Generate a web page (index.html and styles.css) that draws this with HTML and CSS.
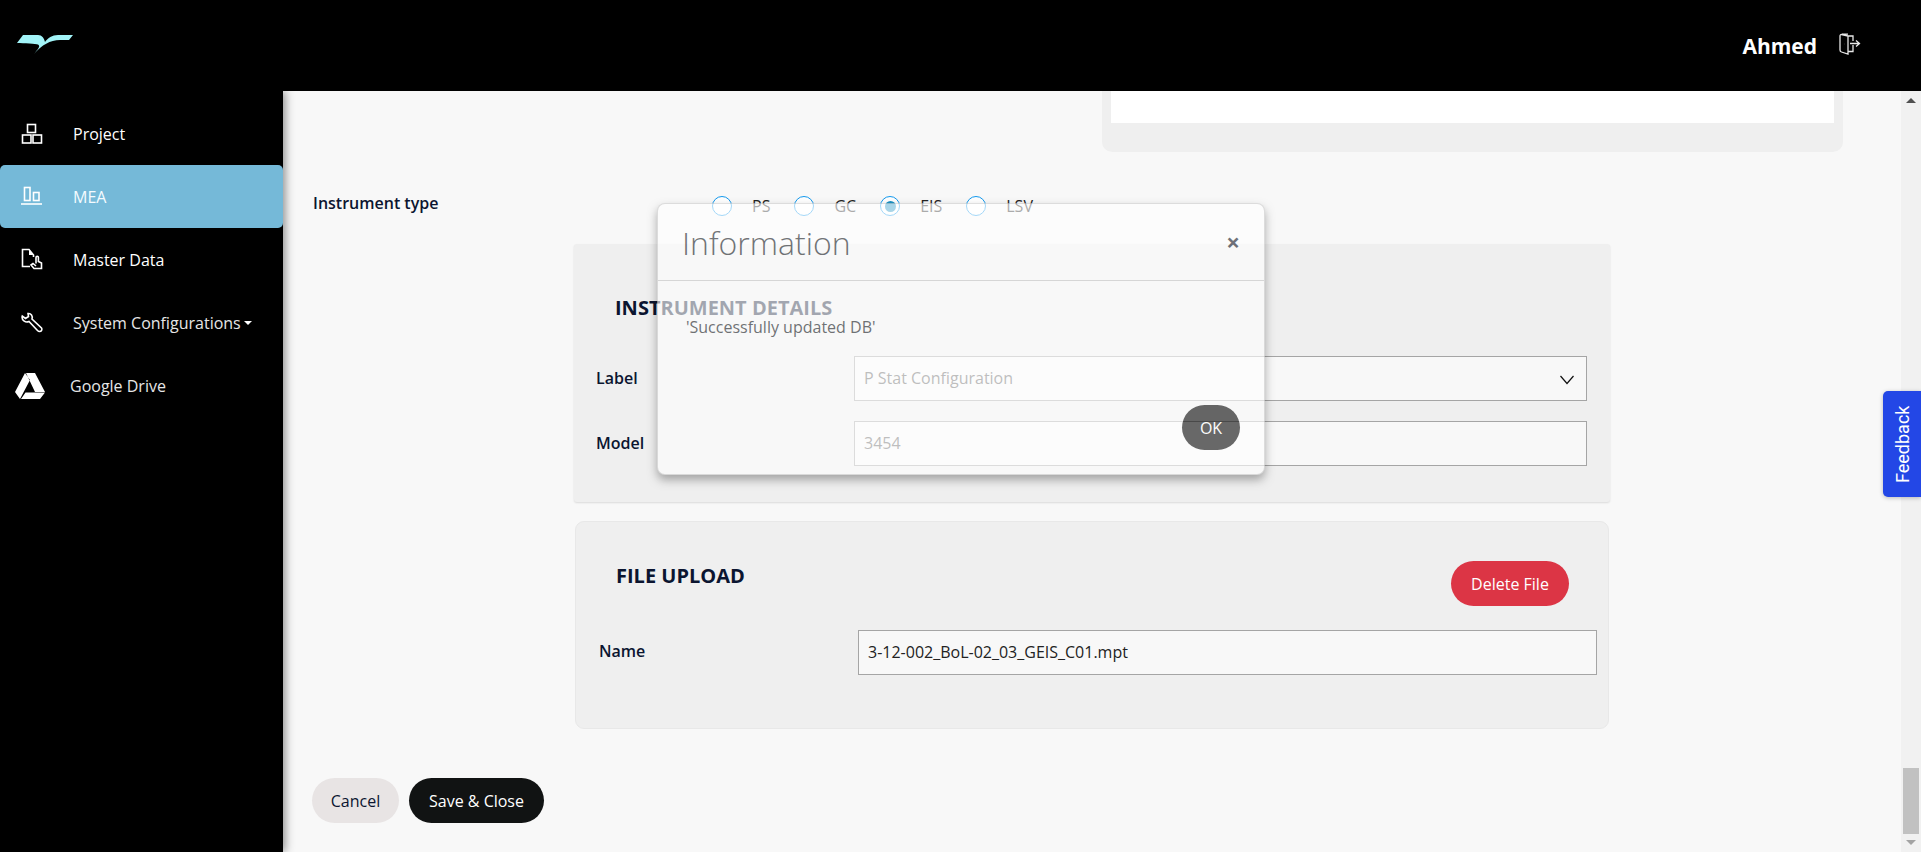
FILE: index.html
```html
<!DOCTYPE html>
<html lang="en">
<head>
<meta charset="utf-8">
<title>MEA</title>
<link rel="stylesheet" href="styles.css">
</head>
<body>
<div class="app">
  <header class="topbar">
    <svg class="logo" viewBox="0 0 61 24" aria-hidden="true"><path d="M1 10 L7 2 H22 C26 2 28 5 29 9 C32 5 36 2 42 2 H57 L53 7 H44 C34 7 26 12 18 21 C22 16 25 13 22 11.5 C20 10.5 8 10.5 1 10 Z"/></svg>
    <div class="user">
      <span class="user-name">Ahmed</span>
      <svg class="logout" viewBox="0 0 22 22" aria-hidden="true"><path d="M14 12 V18.5 H9 M9 3 H14 V8 M9 3 L2.5 1.5 Q1 1.5 1 3 V17 Q1 18.5 2.5 19 L9 21 V3 Z M9 1.2 H3 M5.5 11 h.1 M11 10.5 H20 M17 7.5 L20.5 10.5 L17 13.5"/></svg>
    </div>
  </header>
  <div class="body-row">
    <nav class="sidebar">
      <a class="nav-item">
        <svg class="nav-icon" viewBox="0 0 52 63" aria-hidden="true"><rect x="6.5" y="22.5" width="8" height="8"/><rect x="1.5" y="33" width="8.5" height="8"/><rect x="12" y="33" width="8.5" height="8"/></svg>
        <span>Project</span>
      </a>
      <a class="nav-item is-active">
        <svg class="nav-icon" viewBox="0 0 52 63" aria-hidden="true"><path d="M0 39 H21"/><rect x="3.5" y="22.5" width="5.5" height="13"/><rect x="12.5" y="27.5" width="5.5" height="8"/></svg>
        <span>MEA</span>
      </a>
      <a class="nav-item">
        <svg class="nav-icon" viewBox="0 0 52 63" aria-hidden="true"><path d="M9 38.5 H1.5 V21.5 H8 L12.5 27 V29"/><path class="solid" d="M8 21.5 V27 H12.5 Z"/><path d="M15 35.5 V29.5 a1.2 1.2 0 0 1 2.4 0 V33.5 L20.5 35 V40.5 H13 L10 37 L12 35.5 L15 38"/></svg>
        <span>Master Data</span>
      </a>
      <a class="nav-item is-dim">
        <svg class="nav-icon" viewBox="0 0 52 63" aria-hidden="true"><path d="M7 22.5 C10 22 12 25 11 28 L20.5 37 C21.5 38.5 20.5 40.5 18.5 40.5 C17.8 40.5 17 40 16.5 39.5 L8 30.5 C4.5 32 1 29.5 1 26 L1.3 25 L4.5 27.5 L7.5 25.5 Z"/></svg>
        <span>System Configurations</span><i class="caret"></i>
      </a>
      <a class="nav-item is-dim is-drive">
        <svg class="nav-icon drive-icon" viewBox="0 0 55 63" aria-hidden="true"><path class="solid" d="M10 19 L0 38 L5 45 L15 26 Z M11 19 H20 L30 38 H20 Z M6 45 L10.5 38.5 H30 L25 45 Z"/></svg>
        <span>Google Drive</span>
      </a>
    </nav>
    <main class="main">
      <div class="content">
        <section class="top-card"><div class="top-card-inner"></div></section>
        <div class="type-row">
          <span class="type-label">Instrument type</span>
          <div class="radios">
            <span class="radio"><i class="radio-dot"></i>PS</span>
            <span class="radio"><i class="radio-dot"></i>GC</span>
            <span class="radio"><i class="radio-dot is-on"></i>EIS</span>
            <span class="radio"><i class="radio-dot"></i>LSV</span>
          </div>
        </div>
        <section class="card card-instrument">
          <h2 class="card-title">INSTRUMENT DETAILS</h2>
          <div class="field">
            <label class="field-label">Label</label>
            <div class="field-box">P Stat Configuration
              <svg class="chevron" viewBox="0 0 14 10" aria-hidden="true"><path d="M.5 1 L7 8.5 L13.5 1"/></svg>
            </div>
          </div>
          <div class="field">
            <label class="field-label">Model</label>
            <div class="field-box">3454</div>
          </div>
        </section>
        <section class="card card-file">
          <div class="file-head">
            <h2 class="card-title">FILE UPLOAD</h2>
            <button class="btn btn-danger">Delete File</button>
          </div>
          <div class="field field-file">
            <label class="field-label">Name</label>
            <div class="field-box is-dark">3-12-002_BoL-02_03_GEIS_C01.mpt</div>
          </div>
        </section>
        <div class="actions">
          <button class="btn btn-light">Cancel</button>
          <button class="btn btn-dark">Save &amp; Close</button>
        </div>
      </div>
      <div class="scrollbar">
        <i class="arrow-up"></i>
        <span class="track"><i class="thumb"></i></span>
        <i class="arrow-down"></i>
      </div>
    </main>
  </div>
  <div class="modal">
    <div class="modal-head">
      <h1 class="modal-title">Information</h1>
      <span class="modal-close">×</span>
    </div>
    <div class="modal-body">'Successfully updated DB'</div>
    <div class="modal-foot"><button class="btn btn-ok">OK</button></div>
  </div>
  <button class="feedback">Feedback</button>
</div>
</body>
</html>
```
FILE: styles.css
```css
* { box-sizing: border-box; }
html, body { margin: 0; height: 100%; overflow: hidden; }
body { font-family: "Open Sans", "Liberation Sans", sans-serif; font-size: 16px; color: #0b1530; background: #f8f8f8; }
.app { position: relative; height: 852px; display: flex; flex-direction: column; }

.topbar { height: 91px; flex: none; background: #000; display: flex; align-items: center; justify-content: space-between; padding: 0 60px 0 16px; position: relative; z-index: 3; }
.logo { width: 61px; height: 24px; margin-top: -1px; }
.logo path { fill: #a2f4f8; }
.user { display: flex; align-items: center; gap: 22px; }
.user-name { color: #fff; font-weight: 700; font-size: 21px; }
.logout { width: 22px; height: 22px; margin-top: -3px; }
.logout path { fill: none; stroke: #e6e6e6; stroke-width: 1.3; }

.body-row { flex: 1; display: flex; min-height: 0; }
.sidebar { width: 283px; flex: none; background: #000; padding-top: 11px; box-shadow: 2px 0 9px rgba(0,0,0,.45); position: relative; z-index: 2; }
.nav-item { height: 63px; display: flex; align-items: center; padding-left: 21px; color: #fff; font-size: 16px; font-weight: 500; }
.nav-item.is-active { background: #75b9d8; border-radius: 5px; color: #f4fbff; }
.nav-item.is-dim { color: #e6e6e6; }
.nav-item.is-drive { padding-left: 15px; }
.nav-icon { width: 52px; height: 63px; flex: none; }
.drive-icon { width: 55px; }
.nav-icon rect, .nav-icon path { fill: none; stroke: #fff; stroke-width: 1.6; }
.nav-icon .solid { fill: #fff; stroke: none; }
.caret { display: inline-block; margin-left: 3px; border-top: 4px solid #fff; border-left: 4px solid transparent; border-right: 4px solid transparent; }

.main { flex: 1; display: flex; min-width: 0; background: #f8f8f8; }
.content { flex: 1; min-width: 0; padding-left: 30px; }

.top-card { margin-left: 789px; width: 741px; height: 61px; background: #efefef; border-radius: 0 0 10px 10px; padding: 0 9px; }
.top-card-inner { height: 32px; background: #fff; }

.type-row { display: flex; margin-top: 38px; height: 30px; }
.type-label { width: 399px; flex: none; font-weight: 600; line-height: 24px; margin-top: 1px; }
.radios { display: flex; gap: 24px; padding-top: 6px; }
.radio { display: flex; align-items: center; gap: 20px; height: 20px; color: #222; }
.radio-dot { width: 20px; height: 20px; border-radius: 50%; border: 1.5px solid #1298ed; display: flex; align-items: center; justify-content: center; background: #fff; }
.radio-dot.is-on::after { content: ""; width: 11px; height: 11px; border-radius: 50%; background: #1a91c3; }

.card { background: #efefef; }
.card-instrument { margin: 24px 0 0 261px; width: 1036px; height: 258px; border-radius: 3px; padding: 50px 23px 0 22px; box-shadow: 0 1px 2px rgba(0,0,0,.12); }
.card-file { margin: 19px 0 0 262px; width: 1034px; height: 208px; border-radius: 9px; border: 1px solid #e8e8e8; padding: 30px 11px 0 22px; }
.card-title { margin: 0; font-size: 20px; font-weight: 700; line-height: 28px; padding-left: 19px; color: #0b1530; }
.card-instrument .card-title { margin-bottom: 34px; }
.field { display: flex; align-items: center; height: 45px; margin-bottom: 20px; }
.field-label { width: 258px; flex: none; font-weight: 600; font-size: 16px; margin-top: -2px; }
.field-box { flex: 1; height: 45px; position: relative; border: 1px solid #a5a5a5; background: #f8f8f8; padding-left: 9px; line-height: 43px; color: #555; font-size: 16px; }
.field-box.is-dark { color: #222; }
.chevron { position: absolute; right: 12px; top: 18px; width: 14px; height: 10px; fill: none; stroke: #111; stroke-width: 1.2; }

.file-head { display: flex; justify-content: space-between; align-items: flex-start; padding-right: 28px; height: 78px; }
.file-head .card-title { padding-top: 10px; padding-left: 18px; }
.file-head .btn { margin-top: 9px; }
.field-file { padding-left: 0; }
.field-file .field-label { width: 259px; margin-left: 1px; margin-top: -4px; }

.btn { border: 0; height: 45px; border-radius: 23px; font-family: inherit; font-size: 16px; padding: 0; }
.btn-danger { width: 118px; background: #dc3545; color: #fff; }
.btn-light { width: 87px; background: #e8e4e4; color: #0b1530; }
.btn-dark { width: 135px; background: #111313; color: #fff; }
.btn-ok { width: 58px; background: #111; color: #fff; }
.actions { display: flex; gap: 10px; margin: 49px 0 0 -1px; }

.scrollbar { width: 20px; flex: none; background: #f1f1f1; display: flex; flex-direction: column; align-items: center; }
.arrow-up { margin-top: 7px; border-bottom: 5px solid #505050; border-left: 5px solid transparent; border-right: 5px solid transparent; }
.arrow-down { margin: 6px 0 7px; border-top: 5px solid #a3a3a3; border-left: 5px solid transparent; border-right: 5px solid transparent; }
.track { flex: 1; width: 16px; display: flex; flex-direction: column; justify-content: flex-end; margin-bottom: 0; }
.thumb { display: block; height: 66px; background: #c1c1c1; }

.modal { position: absolute; left: 657px; top: 203px; width: 608px; height: 272px; background: #fff; border: 1px solid rgba(0,0,0,.2); border-radius: 8px; box-shadow: 0 5px 10px rgba(0,0,0,.5); opacity: .62; display: flex; flex-direction: column; z-index: 4; }
.modal-head { height: 77px; flex: none; border-bottom: 1px solid #c8c8c8; display: flex; align-items: center; justify-content: space-between; padding: 0 24px 0 24px; }
.modal-title { margin: 0; font-size: 32px; font-weight: 300; color: #212529; }
.modal-close { font-size: 24px; font-weight: 700; color: #1a1f2e; line-height: 1; }
.modal-body { padding: 34px 0 0 28px; color: #212529; line-height: 24px; height: 124px; }
.modal-foot { display: flex; justify-content: flex-end; padding-right: 24px; }

.feedback { position: absolute; right: 0; top: 391px; width: 38px; height: 106px; border: 0; border-radius: 5px 0 0 5px; background: #2347e6; color: #fff; font-family: Roboto, "Liberation Sans", sans-serif; font-size: 18px; padding: 0; display: flex; align-items: center; justify-content: center; writing-mode: vertical-rl; transform: rotate(180deg); border-radius: 0 5px 5px 0; box-shadow: 0 -1px 4px rgba(0,0,0,.25); z-index: 5; }
```
